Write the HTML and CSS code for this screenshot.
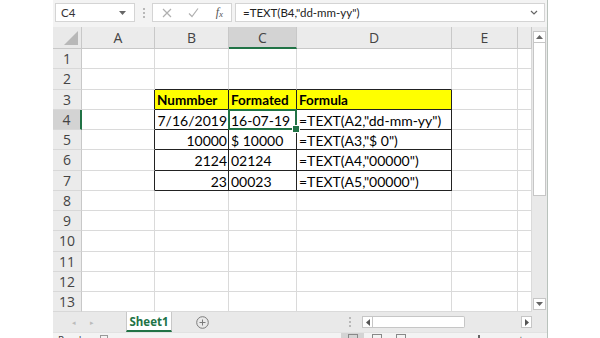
FILE: index.html
```html
<!DOCTYPE html>
<html>
<head>
<meta charset="utf-8">
<link rel="stylesheet" href="styles.css">
</head>
<body>
<div class="app">
  <div class="fbar">
    <div class="namebox"><span class="nb-text">C4</span><svg class="nb-dd" width="7" height="4" viewBox="0 0 7 4"><path d="M0 0h7L3.5 4z" fill="#666"/></svg></div>
    <div class="grip"><i></i><i></i><i></i></div>
    <div class="btns">
      <svg width="10" height="10" viewBox="0 0 10 10"><path d="M1 1l8 8M9 1l-8 8" stroke="#b0b0b0" stroke-width="1.2" fill="none"/></svg>
      <svg width="11" height="10" viewBox="0 0 11 10"><path d="M1 5.5l3 3 6-8" stroke="#b0b0b0" stroke-width="1.2" fill="none"/></svg>
      <span class="fx">f<sub>x</sub></span>
    </div>
    <div class="finput"><span>=TEXT(B4,"dd-mm-yy")</span><svg width="8" height="5" viewBox="0 0 8 5"><path d="M1 1l3 3 3-3" stroke="#666" stroke-width="1.2" fill="none"/></svg></div>
  </div>
  <div class="main">
    <div class="sheet">
      <div class="corner"><span class="tri"></span></div>
      <div class="ch">A</div><div class="ch">B</div><div class="ch sel">C</div><div class="ch">D</div><div class="ch">E</div><div class="ch"></div>

      <div class="rh">1</div><div class="c"></div><div class="c"></div><div class="c"></div><div class="c"></div><div class="c"></div><div class="c"></div>
      <div class="rh">2</div><div class="c"></div><div class="c tb"></div><div class="c tb"></div><div class="c tb"></div><div class="c"></div><div class="c"></div>
      <div class="rh">3</div><div class="c tr"></div><div class="c t hd">Nummber</div><div class="c t hd">Formated</div><div class="c t hd">Formula</div><div class="c"></div><div class="c"></div>
      <div class="rh sel">4</div><div class="c tr"></div><div class="c t num">7/16/2019</div><div class="c t cur">16-07-19</div><div class="c t">=TEXT(A2,"dd-mm-yy")</div><div class="c"></div><div class="c"></div>
      <div class="rh">5</div><div class="c tr"></div><div class="c t num">10000</div><div class="c t">$ 10000</div><div class="c t">=TEXT(A3,"$ 0")</div><div class="c"></div><div class="c"></div>
      <div class="rh">6</div><div class="c tr"></div><div class="c t num">2124</div><div class="c t">02124</div><div class="c t">=TEXT(A4,"00000")</div><div class="c"></div><div class="c"></div>
      <div class="rh">7</div><div class="c tr"></div><div class="c t num">23</div><div class="c t">00023</div><div class="c t">=TEXT(A5,"00000")</div><div class="c"></div><div class="c"></div>
      <div class="rh">8</div><div class="c"></div><div class="c"></div><div class="c"></div><div class="c"></div><div class="c"></div><div class="c"></div>
      <div class="rh">9</div><div class="c"></div><div class="c"></div><div class="c"></div><div class="c"></div><div class="c"></div><div class="c"></div>
      <div class="rh">10</div><div class="c"></div><div class="c"></div><div class="c"></div><div class="c"></div><div class="c"></div><div class="c"></div>
      <div class="rh">11</div><div class="c"></div><div class="c"></div><div class="c"></div><div class="c"></div><div class="c"></div><div class="c"></div>
      <div class="rh">12</div><div class="c"></div><div class="c"></div><div class="c"></div><div class="c"></div><div class="c"></div><div class="c"></div>
      <div class="rh">13</div><div class="c"></div><div class="c"></div><div class="c"></div><div class="c"></div><div class="c"></div><div class="c"></div>
    </div>
    <div class="vscroll">
      <div class="varrow"><svg width="7" height="4" viewBox="0 0 7 4"><path d="M0 4h7L3.5 0z" fill="#666"/></svg></div>
      <div class="vthumb"></div>
      <div class="vtrack"></div>
      <div class="varrow"><svg width="7" height="4" viewBox="0 0 7 4"><path d="M0 0h7L3.5 4z" fill="#666"/></svg></div>
    </div>
  </div>
  <div class="tabs">
    <div class="nav"><span>◂</span><span>▸</span></div>
    <div class="tab">Sheet1</div>
    <div class="add"><svg width="13" height="13" viewBox="0 0 13 13"><circle cx="6.5" cy="6.5" r="5.8" stroke="#7a7a7a" fill="none"/><path d="M6.5 3.5v6M3.5 6.5h6" stroke="#7a7a7a"/></svg></div>
    <div class="spacer"></div>
    <div class="hdots"><i></i><i></i><i></i></div>
    <div class="hscroll">
      <div class="harrow"><svg width="4" height="7" viewBox="0 0 4 7"><path d="M4 0v7L0 3.5z" fill="#555"/></svg></div>
      <div class="hthumb"></div>
      <div class="htrack"></div>
      <div class="harrow"><svg width="4" height="7" viewBox="0 0 4 7"><path d="M0 0v7L4 3.5z" fill="#555"/></svg></div>
    </div>
  </div>
  <div class="status">
    <span class="ready">Ready</span>
    <span class="sicon"></span>
    <span class="view on"><i></i></span>
    <span class="view"><i></i></span>
    <span class="view"><i></i></span>
    <span class="slider"></span>
    <span class="zoom">+ 140%</span>
  </div>
</div>
</body>
</html>
```
FILE: styles.css
```css
* { box-sizing: border-box; }
html, body { margin: 0; padding: 0; background: #fff; }
body { width: 600px; height: 338px; overflow: hidden; font-family: "Open Sans", "Liberation Sans", sans-serif; }

.app {
  margin-left: 53px;
  width: 495px;
  height: 338px;
  background: #f3f3f3;
  border-right: 1px solid #b9c2bc;
  display: flex;
  flex-direction: column;
  overflow: hidden;
}

/* formula bar */
.fbar {
  height: 27px;
  display: flex;
  align-items: flex-start;
  padding: 3px 2px 0 2px;
  flex: none;
}
.namebox {
  width: 80px; height: 19px;
  background: #fff; border: 1px solid #d4d4d4;
  display: flex; align-items: center; justify-content: space-between;
  padding: 0 8px 0 5px;
}
.nb-text { font-family: Lato, sans-serif; font-size: 11.5px; color: #333; }
.grip { width: 17px; height: 19px; display: flex; flex-direction: column; align-items: center; justify-content: center; gap: 2px; }
.grip i { width: 2px; height: 2px; background: #b8b8b8; display: block; }
.btns {
  width: 80px; height: 19px; background: #fff; border: 1px solid #d4d4d4;
  display: flex; align-items: center; justify-content: space-between; padding: 0 8px 0 9px;
}
.fx { font-family: "Liberation Serif", serif; font-style: italic; font-size: 12px; color: #555; }
.fx sub { font-size: 9px; vertical-align: -1px; }
.finput {
  margin-left: 3px; width: 310px; height: 19px; background: #fff; border: 1px solid #d4d4d4;
  display: flex; align-items: center; justify-content: space-between; padding: 0 6px 0 7px;
  font-family: Lato, sans-serif; font-size: 11.5px; color: #222;
}

/* grid */
.main { display: flex; flex: none; height: 285px; }
.sheet {
  width: 479px;
  display: grid;
  grid-template-columns: 29px 73px 74px 68px 155px 66px 14px;
  grid-template-rows: 22px repeat(13, 20.25px);
  background: #fff;
}
.corner { background: #e9e9e9; border-right: 1px solid #c8c8c8; border-bottom: 1px solid #c8c8c8; position: relative; }
.tri { position: absolute; right: 3px; bottom: 3px; width: 0; height: 0; border-left: 14px solid transparent; border-bottom: 14px solid #b8b8b8; }
.ch {
  background: #ebebeb; border-right: 1px solid #c8c8c8; border-bottom: 1px solid #c8c8c8;
  font-size: 14px; color: #444; text-align: center; line-height: 21px;
}
.ch.sel { background: #d3d3d3; border-bottom: 2px solid #217346; }
.rh {
  background: #ebebeb; border-right: 1px solid #c8c8c8; border-bottom: 1px solid #d8d8d8;
  font-size: 14px; color: #444; text-align: center; line-height: 20px;
}
.rh.sel { background: #d3d3d3; border-right: 2px solid #217346; }
.c {
  border-right: 1px solid #dadada; border-bottom: 1px solid #dadada;
  font-family: Lato, "Open Sans", sans-serif;
  font-size: 14px; color: #000; line-height: 21px; padding: 0 1px 0 2px;
  white-space: nowrap; overflow: visible; position: relative;
}
.c.tb { border-bottom-color: #222; }
.c.tr { border-right-color: #222; }
.c.t { border-right-color: #222; border-bottom-color: #222; }
.c.hd { background: #ffff00; font-weight: 700; font-size: 13.5px; }
.c.num { text-align: right; }
.c.cur::after {
  content: ""; position: absolute; left: -1px; top: -1px; right: -1px; bottom: -1px;
  border: 2px solid #217346;
}
.c.cur::before {
  content: ""; position: absolute; right: -4px; bottom: -4px; width: 6px; height: 6px;
  background: #217346; border: 1px solid #fff; z-index: 2;
}

/* vertical scrollbar */
.vscroll {
  width: 15px; background: #e9e9e9; padding: 4px 1px 2px 1px;
  display: flex; flex-direction: column;
}
.varrow { height: 12px; background: #fff; border: 1px solid #c6c6c6; display: flex; align-items: center; justify-content: center; flex: none; }
.vthumb { height: 153px; background: #fff; border: 1px solid #c6c6c6; border-top: none; flex: none; }
.vtrack { flex: 1; background: #e9e9e9; }

/* tabs */
.tabs { height: 20px; flex: none; display: flex; align-items: stretch; background: #e9e9e9; }
.nav { width: 73px; display: flex; gap: 14px; padding-left: 19px; align-items: center; font-size: 7px; color: #bbb; }
.tab {
  width: 46px; background: #fff; border-left: 1px solid #c8c8c8; border-right: 1px solid #c8c8c8;
  border-bottom: 2px solid #217346;
  font-size: 11.5px; font-weight: 700; color: #217346; text-align: center; line-height: 19px;
}
.add { margin-left: 24px; display: flex; align-items: center; }
.spacer { flex: 1; }
.hdots { width: 12px; margin-right: 6px; display: flex; flex-direction: column; align-items: center; justify-content: center; gap: 2px; }
.hdots i { width: 2px; height: 2px; background: #b8b8b8; display: block; }
.hscroll { width: 170px; margin-right: 15px; display: flex; align-items: center; }
.harrow { width: 11px; height: 12px; background: #fff; border: 1px solid #c6c6c6; display: flex; align-items: center; justify-content: center; flex: none; }
.hthumb { width: 92px; height: 12px; background: #fff; border: 1px solid #c6c6c6; border-left: none; border-radius: 0 2px 2px 0; flex: none; }
.htrack { flex: 1; }

/* status */
.status { flex: 1; background: #f3f3f3; border-top: 1px solid #e2e2e2; display: flex; align-items: flex-start; font-size: 10px; line-height: 12px; color: #444; }
.ready { margin-left: 5px; margin-top: 1px; }
.sicon { width: 9px; height: 5px; border: 1px solid #999; margin: 2px 0 0 14px; }
.view { width: 26px; height: 6px; display: flex; justify-content: center; padding-top: 1px; }
.view i { width: 10px; height: 6px; border: 1px solid #888; display: block; }
.view.on { background: #d4d4d4; margin-left: 233px; }
.view + .view { margin-left: 2px; }
.slider { width: 2px; height: 6px; background: #666; margin: 2px 0 0 66px; }
.zoom { margin-left: 38px; }
```
